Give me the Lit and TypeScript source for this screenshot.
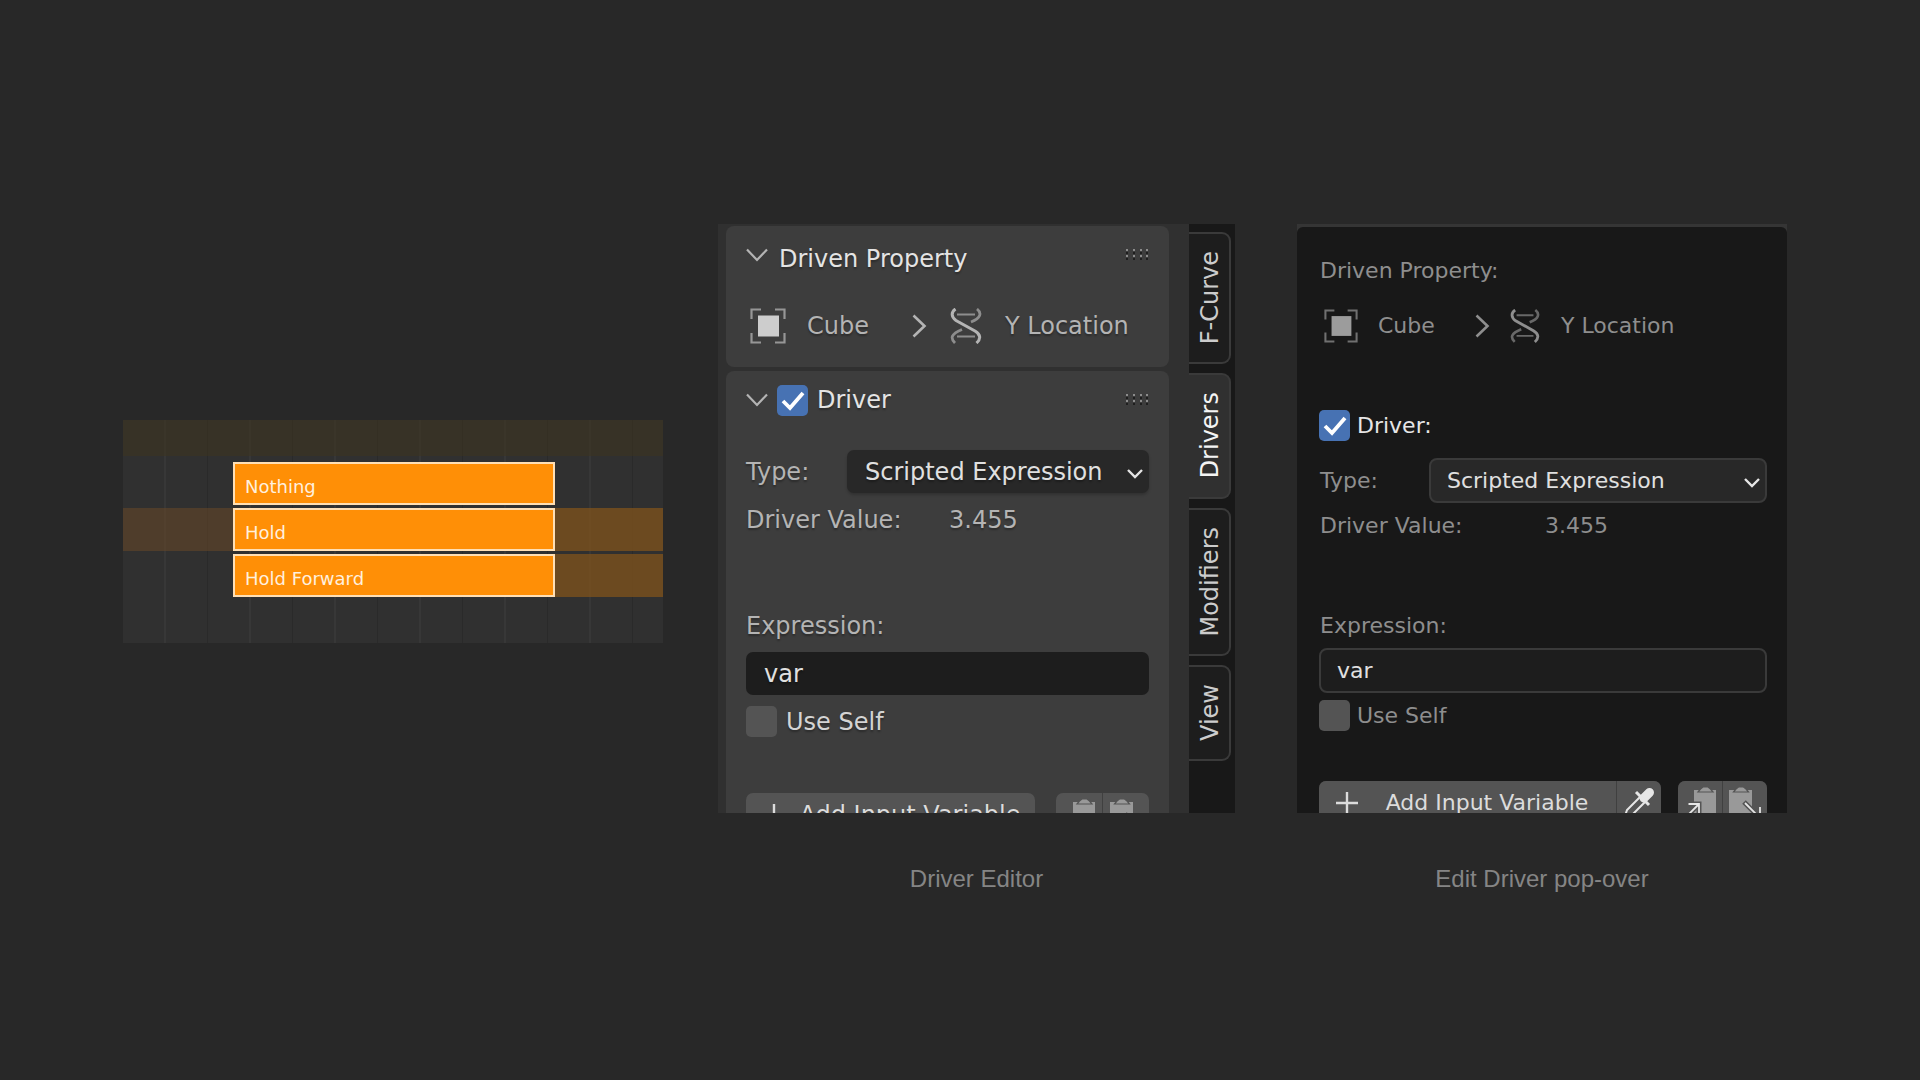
import { LitElement, html, css, svg } from "lit";
import { customElement, property, state } from "lit/decorators.js";
import { classMap } from "lit/directives/class-map.js";

const sharedStyles = css`
  :host {
    display: block;
    box-sizing: border-box;
  }
  *,
  *::before,
  *::after {
    box-sizing: border-box;
  }
  svg {
    display: block;
    flex: none;
    fill: none;
  }
`;

const chevronDown = html`<svg width="22" height="14" viewBox="0 0 22 14" aria-hidden="true">
  <path d="M1 1.5L11 12L21 1.5" stroke="currentColor" stroke-width="2.2" />
</svg>`;

const chevronRight = html`<svg width="15" height="24" viewBox="0 0 15 24" aria-hidden="true">
  <path d="M1.5 1.5L12.5 12L1.5 22.5" stroke="currentColor" stroke-width="2.6" />
</svg>`;

const menuArrow = html`<svg class="menu-arrow" width="16" height="10" viewBox="0 0 16 10" aria-hidden="true">
  <path d="M1 1L8 8L15 1" stroke="currentColor" stroke-width="2.4" />
</svg>`;

const objectIcon = html`<svg class="object-icon" viewBox="0 0 36 36" aria-hidden="true">
  <path
    d="M1.5 11V1.5H11M25 1.5H34.5V11M34.5 25V34.5H25M11 34.5H1.5V25"
    stroke="currentColor"
    stroke-width="2.2"
    opacity=".75"
  />
  <rect class="solid" x="8" y="7.5" width="21" height="21" />
</svg>`;

const channelIcon = html`<svg class="channel-icon" viewBox="0 0 32 36" aria-hidden="true">
  <g stroke="currentColor" stroke-width="2" opacity=".68">
    <path d="M7 6.5H25M7 28.5H25" />
    <path d="M27 1C32 5 31 10 21 14" stroke-width="2.8" />
    <path d="M12 21.500C1 26 0 30 5 35" stroke-width="2.8" />
  </g>
  <path
    d="M5.500 1C1 4 1 9 6 12.500L25 23C31 26.500 31 31 26.500 35"
    stroke="currentColor"
    stroke-width="3"
  />
</svg>`;

const gripIcon = html`<svg width="23" height="12" viewBox="0 0 23 12" aria-hidden="true">
  ${[0, 7, 14, 20].map(
    (x) => svg`
      <rect x=${x} y="0" width="2" height="2" fill="#8c8c8c" />
      <rect x=${x} y="3" width="2" height="2" fill="#1e1e1e" />
      <rect x=${x} y="6" width="2" height="2" fill="#8c8c8c" />
      <rect x=${x} y="9" width="2" height="2" fill="#1e1e1e" />`
  )}
</svg>`;

const plusIcon = html`<svg width="22" height="22" viewBox="0 0 22 22" aria-hidden="true">
  <path d="M11 0V22M0 11H22" stroke="currentColor" stroke-width="2.4" />
</svg>`;

const dropperIcon = html`<svg width="32" height="32" viewBox="0 0 32 32" aria-hidden="true">
  <path d="M21 11L26.500 5.500" stroke="#e6e6e6" stroke-width="9" stroke-linecap="round" />
  <path d="M13 5L26 18" stroke="#e6e6e6" stroke-width="3" />
  <path d="M17 10L4 23L1.500 30.500L9 28L22 15" stroke="#e6e6e6" stroke-width="2" />
</svg>`;

const copyIcon = html`<svg width="32" height="32" viewBox="0 0 32 32" aria-hidden="true">
  <path d="M10 3H32V30H10Z" fill="#999" />
  <path d="M14 5L16.500 2L19 0H24L26.500 2L29 5Z" fill="#999" stroke="#545454" stroke-width="1.2" />
  <path d="M4 28L15 17M4 17H15V29" stroke="#545454" stroke-width="5" />
  <path d="M4 28L15 17M4.500 17H15V28" stroke="#e6e6e6" stroke-width="1.800" />
</svg>`;

const pasteIcon = html`<svg width="32" height="32" viewBox="0 0 32 32" aria-hidden="true">
  <path d="M0 3H23V30H0Z" fill="#999" />
  <path d="M4.500 5L7 2L9.500 0H14.500L17 2L19.500 5Z" fill="#999" stroke="#545454" stroke-width="1.2" />
  <path d="M15 15L31 31M31 20V31H20" stroke="#545454" stroke-width="5" />
  <path d="M16 16L31 31M31 20V31H20" stroke="#e6e6e6" stroke-width="1.800" />
</svg>`;

interface Strip {
  name: string;
  before: boolean;
  after: boolean;
}

/** Action strips with their extrapolation shown before and after each strip. */
@customElement("strip-timeline")
class StripTimeline extends LitElement {
  static styles = [
    sharedStyles,
    css`
      :host {
        background:
          repeating-linear-gradient(
            to right,
            transparent 0 41px,
            #373737 41px 43px,
            transparent 43px 84px,
            #2a2a2a 84px 85px
          ),
          #303030;
        padding-bottom: 46px;
      }
      .tracks {
        display: grid;
        gap: 3px;
        margin: 0;
        padding: 0;
        list-style: none;
      }
      .action {
        height: 36px;
        margin-bottom: 6px;
        background: rgba(62, 52, 28, 0.5);
      }
      .track {
        display: grid;
        grid-template-columns: 110px 1fr 108px;
        height: 43px;
      }
      .before {
        background: rgba(110, 74, 38, 0.5);
      }
      .after {
        background: rgba(126, 82, 28, 0.78);
      }
      .strip {
        display: flex;
        align-items: center;
        grid-column: 2;
        padding: 7px 10px 0;
        border: 2px solid #ffdfb4;
        background: #ff8f06;
        color: #fff0de;
        font: 18px/22px "DejaVu Sans", sans-serif;
      }
    `,
  ];

  @property({ attribute: false }) strips: Strip[] = [];

  render() {
    return html`
      <div class="action"></div>
      <ul class="tracks">
        ${this.strips.map(
          (s) => html`<li class="track">
            <span class=${classMap({ before: s.before })}></span>
            <span class="strip">${s.name}</span>
            <span class=${classMap({ after: s.after })}></span>
          </li>`
        )}
      </ul>
    `;
  }
}

/** Driver settings, drawn as a sidebar with panels or as a pop-over. */
@customElement("driver-panel")
class DriverPanel extends LitElement {
  static styles = [
    sharedStyles,
    css`
      :host {
        --row: 43px;
        --gap: 5px;
        --label: 101px;
        --value: 203px;
        --crumbs: 57px 105px 38px 55px 1fr;
        --text: #b4b4b4;
        --strong: #e4e4e4;
        height: 589px;
        overflow: hidden;
        font: 24px/32px "DejaVu Sans", sans-serif;
        color: var(--text);
      }
      :host([popover-style]) {
        --row: 45px;
        --gap: 0px;
        --label: 110px;
        --value: 226px;
        --crumbs: 54px 97px 35px 51px 1fr;
        --text: #8e8e8e;
        --strong: #e6e6e6;
        font-size: 22px;
      }
      button,
      input,
      select {
        font: inherit;
        color: inherit;
        margin: 0;
      }
      .editor {
        display: flex;
        background: #303030;
        text-shadow: 0 2px 2px rgba(0, 0, 0, 0.3);
      }
      .panels {
        flex: 1;
        min-width: 0;
        display: grid;
        gap: 4px;
        padding: 2px 20px 0 8px;
      }
      .panel {
        padding: 8px 20px 20px;
        border-radius: 8px;
        background: #3d3d3d;
      }
      .popover {
        height: 589px;
        background: #353535;
        padding-top: 3px;
      }
      .sheet {
        height: 100%;
        padding: 21px 20px 0 22px;
        border-radius: 6px 6px 0 0;
        background: #181818;
      }
      .head,
      .crumbs,
      .row,
      .check {
        display: flex;
        align-items: center;
        min-height: var(--row);
      }
      .head {
        gap: 9px;
        color: var(--strong);
      }
      .panel .head,
      .panel .head .check {
        min-height: 42px;
      }
      .toggle {
        padding: 0;
        border: 0;
        background: none;
        color: #b4b4b4;
      }
      .title {
        margin: 0;
        font: inherit;
        white-space: nowrap;
      }
      .title.low {
        padding: 8px 0 0 2px;
      }
      .grip {
        margin-left: auto;
      }
      .crumbs {
        display: grid;
        grid-template-columns: var(--crumbs);
        padding-left: 4px;
        white-space: nowrap;
      }
      .panel .crumbs {
        margin-top: 28px;
      }
      .object-icon {
        width: 36px;
        height: 36px;
      }
      .channel-icon {
        width: 32px;
        height: 36px;
      }
      .solid {
        fill: #cdcdcd;
      }
      .popover .crumbs {
        padding-left: 5px;
      }
      .popover .object-icon {
        width: 34px;
        height: 34px;
      }
      .popover .channel-icon {
        width: 30px;
        height: 34px;
      }
      .popover .solid {
        fill: #9c9c9c;
      }
      .group {
        display: grid;
        gap: var(--gap);
      }
      .panel .settings {
        margin-top: 29px;
      }
      .panel .expression {
        margin-top: 63px;
      }
      .panel .actions {
        margin-top: 50px;
      }
      .popover .target {
        gap: 10px;
      }
      .popover .head {
        margin-top: 55px;
      }
      .popover .settings {
        margin-top: 10px;
      }
      .popover .expression {
        margin-top: 55px;
      }
      .popover .actions {
        margin-top: 43px;
      }
      .row {
        display: grid;
        grid-template-columns: var(--label) 1fr;
        white-space: nowrap;
      }
      .row.value {
        grid-template-columns: var(--value) 1fr;
      }
      .popover .label {
        padding-left: 1px;
      }
      .select {
        display: grid;
        position: relative;
        color: var(--strong);
      }
      select,
      .field {
        appearance: none;
        width: 100%;
        height: var(--row);
        padding: 0 18px;
        border: 0;
        border-radius: 7px;
        outline: 0;
        background: #282828;
        color: #e0e0e0;
        text-shadow: inherit;
      }
      .panel select {
        box-shadow: 0 2px 3px rgba(0, 0, 0, 0.2);
      }
      .field {
        background: #1d1d1d;
      }
      .popover select,
      .popover .field {
        padding: 0 16px;
        border: 2px solid #3a3a3a;
        border-radius: 8px;
      }
      .menu-arrow {
        position: absolute;
        right: 6px;
        top: 19px;
        pointer-events: none;
      }
      .popover .menu-arrow {
        right: 7px;
        top: 20px;
      }
      .line {
        display: flex;
        align-items: center;
        min-height: var(--row);
      }
      .check {
        gap: 9px;
        cursor: pointer;
        white-space: nowrap;
      }
      .panel .check {
        color: #d4d4d4;
      }
      .popover .head .check,
      .panel .head .check {
        color: var(--strong);
      }
      .popover .check {
        gap: 7px;
      }
      .box {
        display: grid;
      }
      .box > * {
        grid-area: 1 / 1;
      }
      .box input {
        appearance: none;
        width: 31px;
        height: 31px;
        border-radius: 5px;
        background: #545454;
      }
      .box input:checked {
        background: #4772b3;
      }
      .box svg {
        pointer-events: none;
        visibility: hidden;
      }
      .box input:checked + svg {
        visibility: visible;
      }
      .actions {
        display: flex;
        gap: 21px;
      }
      .popover .actions {
        gap: 17px;
      }
      .cluster {
        display: flex;
        gap: 1px;
        border-radius: 7px;
        overflow: hidden;
        background: #404040;
      }
      .cluster.wide {
        flex: 1;
      }
      .cluster button {
        display: flex;
        align-items: center;
        justify-content: center;
        width: 46px;
        height: 43px;
        padding: 0;
        border: 0;
        background: #545454;
        color: #dcdcdc;
        text-shadow: inherit;
      }
      .popover .cluster button {
        width: 44px;
      }
      .cluster .add,
      .popover .cluster .add {
        flex: 1;
        padding-left: 17px;
        white-space: nowrap;
      }
      .add span {
        flex: 1;
        text-align: center;
      }
      .tabs {
        display: flex;
        flex-direction: column;
        align-items: flex-start;
        gap: 9px;
        width: 46px;
        height: 589px;
        padding-top: 8px;
        background: #181818;
      }
      .tab {
        display: flex;
        align-items: center;
        justify-content: center;
        width: 42px;
        padding: 17px 0 18px 2px;
        border: 2px solid #3a3a3a;
        border-left: 0;
        border-radius: 0 9px 9px 0;
        background: #1d1d1d;
        color: #cccccc;
      }
      .tab.active {
        background: #303030;
        color: #f4f4f4;
      }
      .tab span {
        writing-mode: vertical-rl;
        transform: rotate(180deg);
      }
    `,
  ];

  @property({ type: Boolean, reflect: true, attribute: "popover-style" }) popoverStyle = false;
  @state() private tab = "Drivers";

  private checkbox(label: string, checked: boolean) {
    return html`<label class="check">
      <span class="box">
        <input type="checkbox" .checked=${checked} />
        <svg width="31" height="31" viewBox="0 0 31 31" aria-hidden="true">
          <path d="M6 16L13 23L26 8" stroke="#fff" stroke-width="3.800" />
        </svg>
      </span>
      ${label}
    </label>`;
  }

  private crumbs() {
    return html`<div class="crumbs">
      ${objectIcon}<span>Cube</span>${chevronRight}${channelIcon}<span>Y Location</span>
    </div>`;
  }

  private settings() {
    return html`
      <div class="group settings">
        <div class="row">
          <label class="label" for="type">Type:</label>
          <span class="select">
            <select id="type">
              <option>Scripted Expression</option>
            </select>
            ${menuArrow}
          </span>
        </div>
        <div class="row value"><span class="label">Driver Value:</span><span>3.455</span></div>
      </div>
      <div class="group expression">
        <label class="label line" for="expression">Expression:</label>
        <input class="field" id="expression" type="text" value="var" />
        ${this.checkbox("Use Self", false)}
      </div>
      <div class="actions">
        <div class="cluster wide">
          <button class="add" type="button">${plusIcon}<span>Add Input Variable</span></button>
          ${this.popoverStyle
            ? html`<button type="button" aria-label="Eyedropper">${dropperIcon}</button>`
            : null}
        </div>
        <div class="cluster">
          <button type="button" aria-label="Copy variables">${copyIcon}</button>
          <button type="button" aria-label="Paste variables">${pasteIcon}</button>
        </div>
      </div>
    `;
  }

  private renderPopover() {
    return html`<div class="popover">
      <div class="sheet">
        <div class="group target">
          <div class="label line">Driven Property:</div>
          ${this.crumbs()}
        </div>
        <div class="head">${this.checkbox("Driver:", true)}</div>
        ${this.settings()}
      </div>
    </div>`;
  }

  private renderEditor() {
    return html`<div class="editor">
      <div class="panels">
        <section class="panel">
          <header class="head">
            <button class="toggle" type="button" aria-label="Collapse">${chevronDown}</button>
            <h2 class="title low">Driven Property</h2>
            <span class="grip">${gripIcon}</span>
          </header>
          ${this.crumbs()}
        </section>
        <section class="panel">
          <header class="head">
            <button class="toggle" type="button" aria-label="Collapse">${chevronDown}</button>
            ${this.checkbox("Driver", true)}
            <span class="grip">${gripIcon}</span>
          </header>
          ${this.settings()}
        </section>
      </div>
      <nav class="tabs">
        ${["F-Curve", "Drivers", "Modifiers", "View"].map(
          (name) => html`<button
            type="button"
            class=${classMap({ tab: true, active: name === this.tab })}
            @click=${() => (this.tab = name)}
          >
            <span>${name}</span>
          </button>`
        )}
      </nav>
    </div>`;
  }

  render() {
    return this.popoverStyle ? this.renderPopover() : this.renderEditor();
  }
}

@customElement("app-root")
class AppRoot extends LitElement {
  static styles = [
    sharedStyles,
    css`
      :host {
        min-height: 100vh;
        background: #282828;
      }
      .page {
        display: flex;
        align-items: flex-start;
        gap: 55px;
        padding: 224px 133px 0 123px;
      }
      strip-timeline {
        flex: 540 1 0;
        margin-top: 196px;
      }
      .figures {
        display: flex;
        flex: 1069 1 0;
        gap: 62px;
      }
      figure {
        margin: 0;
        min-width: 0;
        flex: 517 1 0;
      }
      figure.narrow {
        flex-grow: 490;
      }
      figcaption {
        margin-top: 52px;
        font: 24px/28px "Liberation Sans", Arial, sans-serif;
        color: #858585;
        text-align: center;
      }
    `,
  ];

  private strips: Strip[] = [
    { name: "Nothing", before: false, after: false },
    { name: "Hold", before: true, after: true },
    { name: "Hold Forward", before: false, after: true },
  ];

  render() {
    return html`<main class="page">
      <strip-timeline .strips=${this.strips}></strip-timeline>
      <div class="figures">
        <figure>
          <driver-panel></driver-panel>
          <figcaption>Driver Editor</figcaption>
        </figure>
        <figure class="narrow">
          <driver-panel popover-style></driver-panel>
          <figcaption>Edit Driver pop-over</figcaption>
        </figure>
      </div>
    </main>`;
  }
}
